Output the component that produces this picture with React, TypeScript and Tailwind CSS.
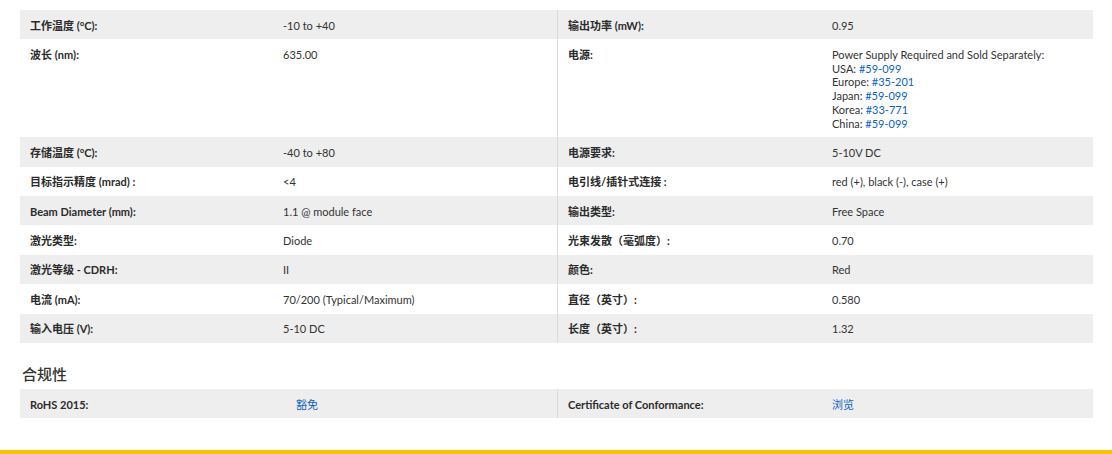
import type { ReactNode } from 'react'

type Row = { l: ReactNode; v: ReactNode; rl: ReactNode; rv: ReactNode }

const Link = ({ children }: { children: ReactNode }) => (
  <a href="#" className="text-[#0a62c9]">{children}</a>
)

const rows: Row[] = [
  { l: '工作温度 (°C):', v: '-10 to +40', rl: '输出功率 (mW):', rv: '0.95' },
  {
    l: '波长 (nm):',
    v: '635.00',
    rl: '电源:',
    rv: (
      <>
        Power Supply Required and Sold Separately:<br />
        USA: <Link>#59-099</Link><br />
        Europe: <Link>#35-201</Link><br />
        Japan: <Link>#59-099</Link><br />
        Korea: <Link>#33-771</Link><br />
        China: <Link>#59-099</Link>
      </>
    ),
  },
  { l: '存储温度 (°C):', v: '-40 to +80', rl: '电源要求:', rv: '5-10V DC' },
  { l: '目标指示精度 (mrad) :', v: '<4', rl: '电引线/插针式连接 :', rv: 'red (+), black (-), case (+)' },
  { l: 'Beam Diameter (mm):', v: '1.1 @ module face', rl: '输出类型:', rv: 'Free Space' },
  { l: '激光类型:', v: 'Diode', rl: '光束发散（毫弧度）:', rv: '0.70' },
  { l: '激光等级 - CDRH:', v: 'II', rl: '颜色:', rv: 'Red' },
  { l: '电流 (mA):', v: '70/200 (Typical/Maximum)', rl: '直径（英寸）:', rv: '0.580' },
  { l: '输入电压 (V):', v: '5-10 DC', rl: '长度（英寸）:', rv: '1.32' },
]

function SpecRow({ row, i, cols }: { row: Row; i: number; cols: string }) {
  return (
    <div className={`grid ${cols} ${i % 2 === 0 ? 'bg-[#eeeeee]' : 'bg-white'}`}>
      <div className="px-[10px] pt-[8.6px] pb-[7.1px] font-bold text-[#2b2b2b]">{row.l}</div>
      <div className="px-[10px] pt-[8.6px] pb-[7.1px]">{row.v}</div>
      <div className="px-[10px] pt-[8.6px] pb-[7.1px] font-bold text-[#2b2b2b] border-l border-[#dcdcdc]">{row.rl}</div>
      <div className="px-[10px] pt-[8.6px] pb-[7.1px]">{row.rv}</div>
    </div>
  )
}

export default function App() {
  return (
    <div
      className="w-[1112px] h-[454px] bg-white text-[11px] leading-[13.7px] text-[#333] relative overflow-hidden"
      style={{ fontFamily: 'Lato, "Noto Sans CJK SC", sans-serif' }}
    >
      <div className="pt-[10px] pl-[20px] w-[1093px]">
        {/* main spec table */}
        <div>
          {rows.map((r, i) => (
            <SpecRow key={i} row={r} i={i} cols="grid-cols-[253px_284px_265px_271px]" />
          ))}
        </div>

        {/* compliance */}
        <h3 className="mt-[22px] mb-[6px] pl-[2px] text-[15px] leading-[18px] text-[#333] font-medium">合规性</h3>
        <SpecRow
          i={0}
          cols="grid-cols-[266px_271px_265px_271px]"
          row={{
            l: 'RoHS 2015:',
            v: <Link>豁免</Link>,
            rl: 'Certificate of Conformance:',
            rv: <Link>浏览</Link>,
          }}
        />
      </div>
      <div className="absolute left-0 right-0 bottom-0 h-[4px] bg-[#f7c600]" />
    </div>
  )
}
